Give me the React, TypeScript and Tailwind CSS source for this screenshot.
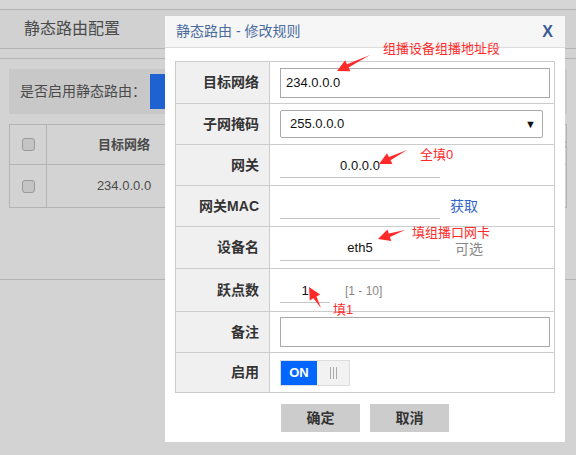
import React from 'react'

const cjk = { fontFamily: '"Liberation Sans", "Noto Sans CJK SC", sans-serif' }

// 红色标注箭头：尾部细、头部三角
function Arrow({ x1, y1, x2, y2 }: { x1: number; y1: number; x2: number; y2: number }) {
  const dx = x2 - x1
  const dy = y2 - y1
  const len = Math.sqrt(dx * dx + dy * dy)
  const ux = dx / len
  const uy = dy / len
  const nx = -uy
  const ny = ux
  const headLen = 12
  const headW = 6
  const shaftW = 1.8
  const bx = x2 - ux * headLen
  const by = y2 - uy * headLen
  const pts = [
    [x1, y1],
    [bx + nx * shaftW, by + ny * shaftW],
    [bx + nx * headW, by + ny * headW],
    [x2, y2],
    [bx - nx * headW, by - ny * headW],
    [bx - nx * shaftW, by - ny * shaftW],
  ]
  return <polygon points={pts.map((p) => p.join(',')).join(' ')} fill="#ff2b2b" />
}

function Checkbox() {
  return <span className="block h-[13px] w-[13px] rounded-[3px] border border-[#9a9a9a] bg-[#c4c4c4]" />
}

function Row({
  label,
  height,
  children,
  last = false,
}: {
  label: string
  height: string
  children: React.ReactNode
  last?: boolean
}) {
  return (
    <div className={`flex ${height} ${last ? '' : 'border-b border-[#cccccc]'}`}>
      <div className="flex w-[94px] shrink-0 items-center justify-end border-r border-[#cccccc] bg-[#f0f0f0] pr-[10px] text-[14px] font-bold text-[#333]">
        {label}
      </div>
      <div className="flex flex-1 items-center pl-[10px]">{children}</div>
    </div>
  )
}

function LineInput({ value, width = 'w-[160px]' }: { value?: string; width?: string }) {
  return (
    <div className={`${width} flex h-[26px] items-end justify-center border-b border-[#c4c4c4] pb-[2px] text-[13px] text-[#111]`}>
      {value}
    </div>
  )
}

export default function App() {
  return (
    <div className="relative h-[455px] w-[576px] overflow-hidden bg-[#d3d3d3]" style={cjk}>
      {/* 背景页面（遮罩下） */}
      <div className="h-[10px] border-b border-[#b3b3b3] bg-[#d6d6d6]" />
      <div className="flex h-[39px] items-center border-b border-[#b3b3b3] bg-[#d1d1d1] pl-[24px] text-[16px] text-[#4a4a4a]">
        静态路由配置
      </div>
      <div className="h-[10px] border-b border-[#b3b3b3]" />
      <div className="h-[221px] border-b border-[#b3b3b3] px-[9px] pt-[10px]">
        <div className="flex h-[45px] items-center bg-[#c8c8c8] pl-[11px] text-[14px] text-[#4a4a4a]">
          <span className="w-[130px]">是否启用静态路由：</span>
          <span className="h-[35px] w-[60px] bg-[#1d62d0]" />
        </div>
        <div className="mt-[10px] border border-[#b3b3b3] text-[13px] text-[#4a4a4a]">
          <div className="flex h-[40px] border-b border-[#b3b3b3]">
            <div className="flex w-[37px] items-center justify-center border-r border-[#b3b3b3]">
              <Checkbox />
            </div>
            <div className="flex w-[154px] items-center justify-center font-bold">目标网络</div>
            <div className="flex flex-1 items-center justify-end font-bold">网关MAC</div>
          </div>
          <div className="flex h-[42px]">
            <div className="flex w-[37px] items-center justify-center border-r border-[#b3b3b3]">
              <Checkbox />
            </div>
            <div className="flex w-[154px] items-center justify-center">234.0.0.0</div>
          </div>
        </div>
      </div>

      {/* 弹窗 */}
      <div className="absolute left-[165px] top-[16px] w-[400px] bg-white pb-[10px]">
        <div className="flex h-[32px] items-center justify-between border-b border-[#dddddd] bg-[#f6f6f6] pl-[11px] pr-[12px]">
          <span className="text-[14px] text-[#4a6b9e]">静态路由 - 修改规则</span>
          <span className="text-[16px] font-bold text-[#3a5a94]" style={{ fontFamily: '"Liberation Sans", sans-serif' }}>
            X
          </span>
        </div>
        <div className="px-[10px] pt-[13px]">
          <div className="border border-[#cccccc]">
            <Row label="目标网络" height="h-[42px]">
              <div className="flex h-[30px] w-[270px] items-center border border-[#a9a9a9] pl-[5px] text-[13px] text-[#111]">
                234.0.0.0
              </div>
            </Row>
            <Row label="子网掩码" height="h-[41px]">
              <div className="flex h-[28px] w-[263px] items-center justify-between rounded-[2px] border border-[#aaaaaa] pl-[9px] pr-[6px] text-[13px] text-[#111]">
                <span>255.0.0.0</span>
                <span className="text-[11px]">▼</span>
              </div>
            </Row>
            <Row label="网关" height="h-[41px]">
              <LineInput value="0.0.0.0" />
            </Row>
            <Row label="网关MAC" height="h-[41px]">
              <LineInput />
              <span className="ml-[10px] pt-[1px] text-[14px] text-[#3366cc]">获取</span>
            </Row>
            <Row label="设备名" height="h-[42px]">
              <LineInput value="eth5" />
              <span className="ml-[15px] pt-[4px] text-[14px] text-[#888]">可选</span>
            </Row>
            <Row label="跃点数" height="h-[43px]">
              <LineInput value="1" width="w-[50px]" />
              <span className="ml-[15px] pt-[2px] text-[12px] text-[#888]">[1 - 10]</span>
            </Row>
            <Row label="备注" height="h-[41px]">
              <div className="h-[30px] w-[270px] border border-[#a9a9a9]" />
            </Row>
            <Row label="启用" height="h-[39px]" last>
              <div className="flex h-[26px] border border-[#dddddd]">
                <div className="flex w-[36px] items-center justify-center bg-[#0066ff] text-[13px] font-bold text-white">
                  ON
                </div>
                <div className="flex w-[32px] items-center justify-center gap-[2px] bg-[#f2f2f2]">
                  <span className="h-[12px] w-px bg-[#aaa]" />
                  <span className="h-[12px] w-px bg-[#aaa]" />
                  <span className="h-[12px] w-px bg-[#aaa]" />
                </div>
              </div>
            </Row>
          </div>
          <div className="mt-[11px] flex justify-center gap-[10px]">
            <button className="h-[28px] w-[79px] bg-[#cccccc] text-[14px] font-bold text-[#333]">确定</button>
            <button className="h-[28px] w-[79px] bg-[#cccccc] text-[14px] font-bold text-[#333]">取消</button>
          </div>
        </div>
      </div>

      {/* 红色标注 */}
      <span className="absolute left-[383px] top-[39px] text-[13px] text-[#ff2b2b]">组播设备组播地址段</span>
      <span className="absolute left-[420px] top-[145px] text-[13px] text-[#ff2b2b]">全填0</span>
      <span className="absolute left-[412px] top-[223px] text-[13px] text-[#ff2b2b]">填组播口网卡</span>
      <span className="absolute left-[333px] top-[300px] text-[13px] text-[#ff2b2b]">填1</span>
      <svg className="pointer-events-none absolute left-0 top-0" width="576" height="455">
        <Arrow x1={370} y1={55} x2={337} y2={71} />
        <Arrow x1={407} y1={150} x2={379} y2={164} />
        <Arrow x1={405} y1={230} x2={378} y2={239} />
        <Arrow x1={321} y1={308} x2={309} y2={287} />
      </svg>
    </div>
  )
}
